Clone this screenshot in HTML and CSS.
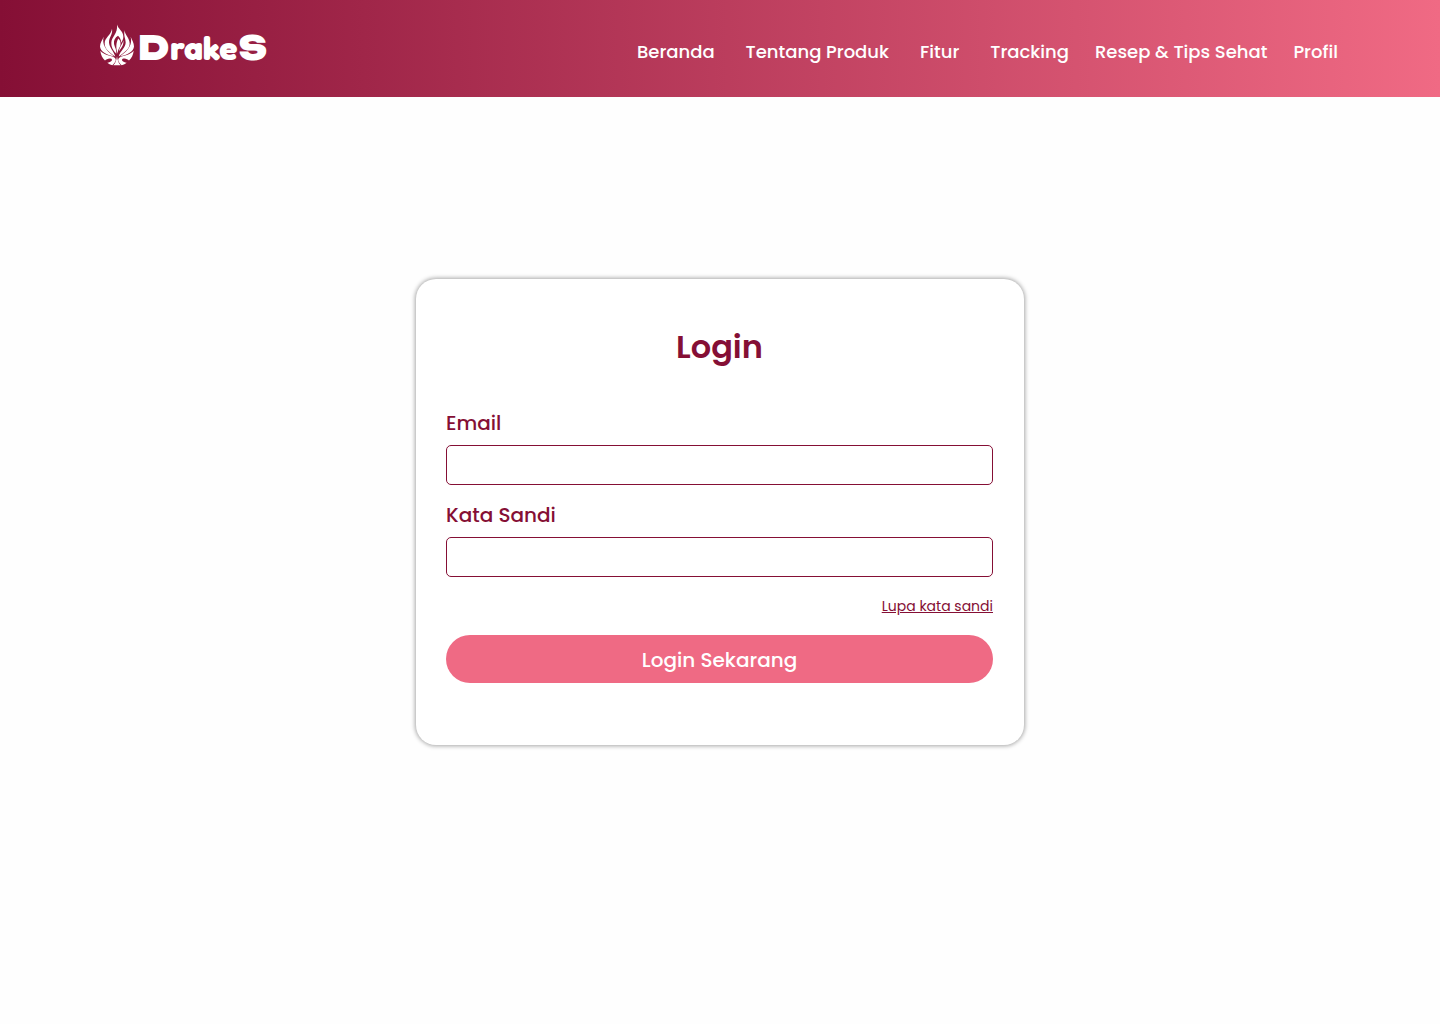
FILE: index.html
```html
<!DOCTYPE html>
<html lang="id">
<head>
<meta charset="utf-8">
<meta name="viewport" content="width=device-width, initial-scale=1">
<title>DrakeS - Login</title>
<link rel="stylesheet" href="styles.css">
</head>
<body>
<header class="header">
  <a class="logo" href="#" aria-label="DrakeS">
    <svg class="logo-mark" viewBox="0 0 102 123" aria-hidden="true">
      <g fill="currentColor">
        <path d="M51 0C54 13 70 20 70 37C70 44 67 49 64 55C63 45 59 38 54 34C45 40 41 48 42 57C43 67 50 73 49 88C38 76 33 67 34 54C35 37 54 28 51 0Z"/>
        <path d="M55 42C64 51 63 62 58 70C55 75 53 80 53 88C47 70 48 54 55 42Z"/>
        <path d="M36 13C39 31 27 37 27 54C28 69 40 78 46 96C30 85 14 75 14 57C14 39 33 33 36 13Z"/>
        <path d="M74 17C74 31 89 40 89 57C89 75 71 85 56 96C61 79 77 69 77 54C77 42 70 33 74 17Z"/>
        <path d="M70 48C72 61 64 70 57 80C58 67 67 60 70 48Z"/>
        <path d="M11 37C6 58 14 75 42 96C20 91 1 81 0 66C0 55 7 48 11 37Z"/>
        <path d="M92 37C97 58 89 75 60 96C82 91 101 81 102 66C102 55 96 48 92 37Z"/>
        <path d="M1 79C12 92 30 93 42 98C51 103 48 112 37 122C31 121 26 118 22 115C34 113 39 107 34 103C27 100 19 104 15 108C7 101 2 91 1 79Z"/>
        <path d="M101 79C90 92 72 93 60 98C51 103 54 112 65 122C71 121 76 118 80 115C68 113 63 107 68 103C75 100 83 104 87 108C95 101 100 91 101 79Z"/>
        <path d="M51 95C53 107 55 115 62 122Q51 123 40 122C47 115 49 107 51 95Z"/>
      </g>
    </svg>
    <span class="logo-text"><span class="logo-wide">D</span>rake<span class="logo-wide">S</span></span>
  </a>
  <nav class="nav" aria-label="Menu utama">
    <a href="#">Beranda</a>
    <a href="#">Tentang Produk</a>
    <a href="#">Fitur</a>
    <a href="#">Tracking</a>
    <a href="#">Resep &amp; Tips Sehat</a>
    <a href="#">Profil</a>
  </nav>
</header>
<main class="main">
  <form class="card">
    <h1 class="title">Login</h1>
    <label class="label" for="email">Email</label>
    <input class="field" id="email" type="email">
    <label class="label" for="password">Kata Sandi</label>
    <input class="field" id="password" type="password">
    <a class="forgot" href="#">Lupa kata sandi</a>
    <button class="submit" type="submit">Login Sekarang</button>
  </form>
</main>
</body>
</html>
```
FILE: styles.css
```css
* {
  box-sizing: border-box;
}

body {
  margin: 0;
  min-height: 100vh;
  display: flex;
  flex-direction: column;
  font-family: Poppins, Inter, sans-serif;
  color: #850f35;
  background: #fefefe;
}

.header {
  display: flex;
  flex-wrap: wrap;
  align-items: flex-start;
  justify-content: space-between;
  padding: 24px 102px 31px 100px;
  color: #fff;
  background: linear-gradient(90deg, #850f35, #f06a84);
}

.logo {
  display: flex;
  align-items: flex-start;
  gap: 4px;
  color: inherit;
  text-decoration: none;
}

.logo-mark {
  width: 34px;
  height: 42px;
}

.logo-text {
  display: flex;
  align-items: baseline;
  gap: 1px;
  padding-top: 10px;
  font-family: Fredoka, "Baloo 2", Poppins, Inter, sans-serif;
  font-size: 34px;
  font-weight: 700;
  line-height: 28px;
}

.logo-wide {
  font-family: Unbounded, "Krona One", "DejaVu Sans", sans-serif;
  font-size: 33px;
  font-weight: 900;
}

.nav {
  display: flex;
  flex-wrap: wrap;
  gap: 26px;
  padding-top: 14px;
  font-size: 18px;
  font-weight: 500;
  line-height: 28px;
}

.nav a {
  color: inherit;
  text-decoration: none;
}

.nav a:nth-child(-n+3) {
  margin-right: 5px;
}

.main {
  flex: 1;
  padding: 182px 24px;
}

.card {
  display: flex;
  flex-direction: column;
  max-width: 608px;
  margin: 0 auto;
  padding: 44px 31px 62px 30px;
  border-radius: 20px;
  background: #fff;
  box-shadow: 0 0 4px 1px rgba(0, 0, 0, 0.35);
}

.title {
  margin: 0 0 37px;
  font-size: 32px;
  font-weight: 600;
  line-height: 48px;
  text-align: center;
}

.label {
  margin-bottom: 7px;
  font-size: 20px;
  font-weight: 500;
  line-height: 30px;
}

.field {
  width: 100%;
  height: 40px;
  margin-bottom: 15px;
  padding: 0 12px;
  border: 1px solid #850f35;
  border-radius: 5px;
  font: inherit;
  color: inherit;
  background: #fff;
}

.forgot {
  align-self: flex-end;
  margin: 3px 0 18px;
  font-size: 14px;
  line-height: 22px;
  color: inherit;
}

.submit {
  height: 48px;
  padding: 2px 0 0;
  border: 0;
  border-radius: 24px;
  font: inherit;
  font-size: 20px;
  font-weight: 500;
  color: #fff;
  background: #ef6a84;
}
```
